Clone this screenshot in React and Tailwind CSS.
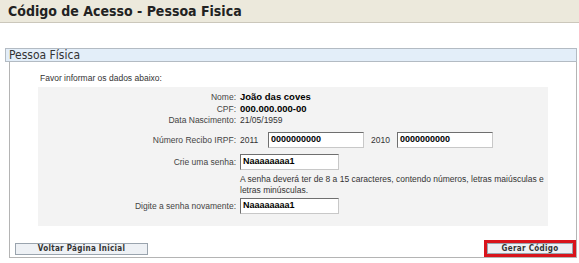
import React from "react";

const small = "font-['Liberation_Sans',Arial,sans-serif]";
const tahoma = "font-['DejaVu_Sans_Condensed','DejaVu_Sans',sans-serif]";

function Field({ value, className = "" }) {
  return (
    <div
      className={`h-[16px] flex items-center px-[2px] bg-white border border-t-[#6f6f6f] border-l-[#6f6f6f] border-r-[#c8c8c8] border-b-[#c8c8c8] text-[9px] font-bold text-black ${className}`}
    >
      {value}
    </div>
  );
}

function Row({ label, children, className = "" }) {
  return (
    <div className={`grid grid-cols-[198px_1fr] gap-x-[4px] items-center ${className}`}>
      <span className="text-right text-[8.5px] text-[#444]">{label}</span>
      <div className="flex items-center">{children}</div>
    </div>
  );
}

export default function App() {
  return (
    <div className={`w-[579px] h-[263px] bg-white overflow-hidden ${small}`}>
      {/* ============ TITLE BAR ============ */}
      <div className="h-[23px] bg-[#ece9dc] border-b border-[#cbc7bb] pl-[8px] flex items-center">
        <h1 className={`text-[14px] font-bold text-[#222] ${tahoma}`}>
          Código de Acesso - Pessoa Fisica
        </h1>
      </div>

      {/* ============ PANEL ============ */}
      <div className="ml-[5px] mt-[25px] w-[572px]">
        <div
          className={`h-[14px] bg-[#e3eef9] border border-[#b3bbc3] pl-[3px] flex items-center text-[12px] text-[#333] ${tahoma}`}
        >
          Pessoa Física
        </div>

        <div className="ml-[4px] h-[196px] border-l border-r border-b border-[#b4b4b4] pt-[11px]">
          <p className="ml-[30px] text-[8.5px] leading-[10px] text-[#333]">
            Favor informar os dados abaixo:
          </p>

          {/* gray data box */}
          <div className="ml-[28px] mt-[4px] w-[510px] bg-[#f3f3f3] pt-[3px] pb-[12px]">
            <Row label="Nome:" className="h-[12px]">
              <span className="text-[9.5px] font-bold text-black">João das coves</span>
            </Row>
            <Row label="CPF:" className="h-[12px]">
              <span className="text-[9.5px] font-bold text-black">000.000.000-00</span>
            </Row>
            <Row label="Data Nascimento:" className="h-[13px]">
              <span className="text-[8.5px] text-[#333]">21/05/1959</span>
            </Row>
            <Row label="Número Recibo IRPF:" className="h-[16px] mt-[5px]">
              <span className="text-[8.5px] text-[#333] w-[28px]">2011</span>
              <Field value="0000000000" className="w-[96px]" />
              <span className="text-[8.5px] text-[#333] ml-[7px] w-[26px]">2010</span>
              <Field value="0000000000" className="w-[96px]" />
            </Row>
            <Row label="Crie uma senha:" className="h-[16px] mt-[6px]">
              <Field value="Naaaaaaaa1" className="w-[99px]" />
            </Row>
            <div className="grid grid-cols-[198px_1fr] gap-x-[4px] mt-[4px]">
              <span />
              <p className="text-[8.5px] leading-[11px] text-[#333] w-[310px]">
                A senha deverá ter de 8 a 15 caracteres, contendo números, letras maiúsculas e
                letras minúsculas.
              </p>
            </div>
            <Row label="Digite a senha novamente:" className="h-[16px] mt-[2px]">
              <Field value="Naaaaaaaa1" className="w-[99px]" />
            </Row>
          </div>

          {/* buttons */}
          <div className="flex items-start justify-between mt-[17px] pl-[5px] pr-[3px]">
            <button
              className={`w-[133px] h-[12px] bg-[#eef1f5] border border-[#9aa4ae] text-[8px] font-bold tracking-[0.3px] text-[#333] flex items-center justify-center ${tahoma}`}
            >
              Voltar Página Inicial
            </button>
            <button
              className={`w-[86px] h-[11px] bg-[#eef1f5] border border-[#9aa4ae] text-[8px] font-bold tracking-[0.3px] text-[#333] flex items-center justify-center outline-[3px] outline-solid outline-[#d8141c] ${tahoma}`}
            >
              Gerar Código
            </button>
          </div>
        </div>
      </div>
    </div>
  );
}
